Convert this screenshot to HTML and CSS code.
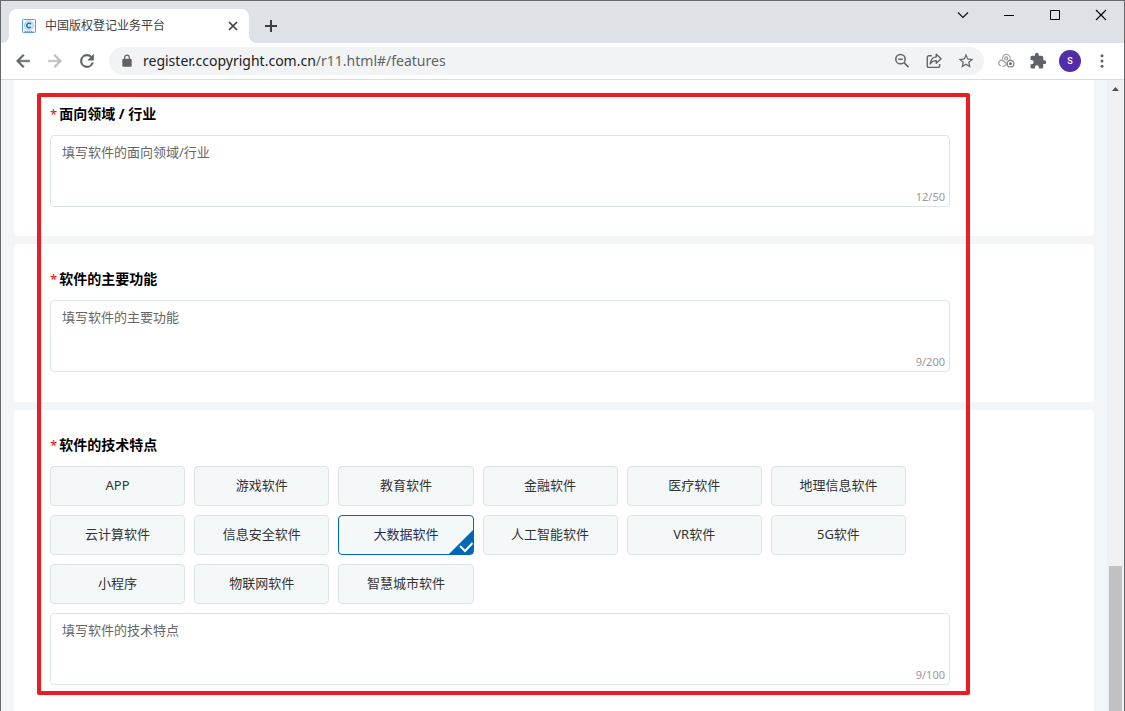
FILE: index.html
```html
<!DOCTYPE html>
<html lang="zh-CN">
<head>
<meta charset="utf-8">
<title>中国版权登记业务平台</title>
<link rel="stylesheet" href="styles.css">
</head>
<body>
<div class="window">
  <header class="titlebar">
    <div class="tab">
      <svg class="favicon" viewBox="0 0 16 16" aria-hidden="true">
        <rect x="1.500" y="1.500" width="13" height="13" rx="1" fill="#f1f8fd" stroke="#5b9fd0"/>
        <circle cx="8" cy="7.500" r="4.600" fill="#cfe5f5" stroke="#9cc8e6" stroke-width=".8"/>
        <path d="M9.900 6.100A2.300 2.300 0 1 0 9.900 8.900" fill="none" stroke="#1c6cad" stroke-width="1.500"/>
        <path d="M3.500 13.500H12.500" stroke="#5b9fd0" stroke-dasharray="1.500 .6"/>
      </svg>
      <span class="tab-title">中国版权登记业务平台</span>
      <button class="tab-close" aria-label="关闭标签页"><svg viewBox="0 0 16 16"><path d="M4 4l8 8M12 4l-8 8" stroke="#3c4043" stroke-width="1.700"/></svg></button>
    </div>
    <button class="new-tab" aria-label="新标签页"><svg viewBox="0 0 16 16"><path d="M8 2v12M2 8h12" stroke="#3c4043" stroke-width="2"/></svg></button>
    <div class="window-controls">
      <button aria-label="搜索标签页"><svg viewBox="0 0 16 16"><path d="M3 5.500l5 5 5-5" fill="none" stroke="#111" stroke-width="1.200"/></svg></button>
      <button aria-label="最小化"><svg viewBox="0 0 16 16"><path d="M3 8.500h10" stroke="#000"/></svg></button>
      <button aria-label="最大化"><svg viewBox="0 0 16 16"><path d="M3.500 3.500h9v9h-9z" fill="none" stroke="#000"/></svg></button>
      <button aria-label="关闭"><svg viewBox="0 0 16 16"><path d="M3 3l10 10M13 3L3 13" stroke="#000" stroke-width="1.200"/></svg></button>
    </div>
  </header>

  <nav class="toolbar">
    <button class="tool" aria-label="后退"><svg viewBox="0 0 24 24" fill="#5f6368" stroke="#5f6368" stroke-width=".6"><path d="M20 11H7.830l5.590-5.590L12 4l-8 8 8 8 1.410-1.410L7.830 13H20z"/></svg></button>
    <button class="tool" aria-label="前进"><svg viewBox="0 0 24 24" fill="#babcbe" stroke="#babcbe" stroke-width=".6"><path d="M4 11h12.170l-5.590-5.590L12 4l8 8-8 8-1.410-1.410L16.170 13H4z"/></svg></button>
    <button class="tool" aria-label="刷新"><svg viewBox="0 0 24 24" fill="#5f6368" stroke="#5f6368" stroke-width=".6"><path d="M17.650 6.350A8 8 0 1 0 19.730 14h-2.080A6 6 0 1 1 12 6c1.660 0 3.140.690 4.220 1.780L13 11h7V4z"/></svg></button>
    <div class="omnibox">
      <svg class="lock" viewBox="0 0 24 24" fill="#5f6368" aria-hidden="true"><path d="M18 8h-1V6A5 5 0 0 0 7 6v2H6a2 2 0 0 0-2 2v10c0 1.100.900 2 2 2h12a2 2 0 0 0 2-2V10a2 2 0 0 0-2-2zM9 6a3 3 0 0 1 6 0v2H9z"/></svg>
      <div class="url"><span>register.ccopyright.com.cn</span>/r11.html#/features</div>
      <button class="tool" aria-label="缩放"><svg viewBox="0 0 24 24" fill="none" stroke="#5f6368" stroke-width="2"><circle cx="10" cy="9.500" r="6.300"/><path d="M14.700 14.200l6 6M7 9.500h6"/></svg></button>
      <button class="tool" aria-label="分享"><svg viewBox="0 0 24 24" fill="none" stroke="#5f6368" stroke-width="1.800" stroke-linejoin="round"><path d="M9 5H5a2 2 0 0 0-2 2v11.500a2 2 0 0 0 2 2h12.500a2 2 0 0 0 2-2V16"/><path d="M15 3l6.500 6L15 15v-3.500c-3.500 0-6 1-8 4.500.5-5 3-9 8-9.500z"/></svg></button>
      <button class="tool" aria-label="收藏"><svg viewBox="0 0 24 24" fill="#5f6368"><path d="M22 9.240l-7.190-.620L12 2 9.190 8.630 2 9.240l5.460 4.730L5.820 21 12 17.270 18.180 21l-1.630-7.030zM12 15.400l-3.760 2.270 1-4.280-3.320-2.880 4.380-.380L12 6.100l1.710 4.040 4.380.380-3.320 2.880 1 4.280z"/></svg></button>
    </div>
    <div class="extensions">
      <button class="tool" aria-label="网盘扩展"><svg viewBox="0 0 24 24" fill="none" stroke="#9a9a9a" stroke-width="1.600"><path d="M7.500 10a5.200 5.200 0 1 1 9.500 1" stroke="#aaa"/><circle cx="12.300" cy="8.500" r="2"/><path d="M5 18.500a4 4 0 1 1 5-5.500l4.500 4.500"/><path d="M7.500 19.500c2.500 0 3.500-1.500 5-3.500"/><circle cx="18" cy="15.500" r="4.400" stroke="#858585"/><circle cx="18" cy="15.500" r="1.100" stroke="#666"/></svg></button>
      <button class="tool" aria-label="扩展程序"><svg viewBox="0 0 24 24" fill="#5f6368"><path d="M20.500 11H19V7a2 2 0 0 0-2-2h-4V3.500a2.500 2.500 0 0 0-5 0V5H4a2 2 0 0 0-2 2v3.800h1.500a2.700 2.700 0 0 1 0 5.400H2V20c0 1.100.9 2 2 2h3.800v-1.500a2.700 2.700 0 0 1 5.400 0V22H17a2 2 0 0 0 2-2v-4h1.500a2.500 2.500 0 0 0 0-5z"/></svg></button>
      <button class="tool avatar" aria-label="用户">S</button>
      <button class="tool" aria-label="菜单"><svg viewBox="0 0 24 24" fill="#5f6368"><circle cx="12" cy="5" r="2"/><circle cx="12" cy="12" r="2"/><circle cx="12" cy="19" r="2"/></svg></button>
    </div>
  </nav>

  <div class="viewport">
    <main class="page">
      <section class="card card-first">
        <label class="heading" for="industry">面向领域 / 行业</label>
        <div class="field">
          <textarea id="industry">填写软件的面向领域/行业</textarea>
          <span class="counter">12/50</span>
        </div>
      </section>
      <section class="card">
        <label class="heading" for="functions">软件的主要功能</label>
        <div class="field">
          <textarea id="functions">填写软件的主要功能</textarea>
          <span class="counter">9/200</span>
        </div>
      </section>
      <section class="card card-last">
        <label class="heading" for="traits">软件的技术特点</label>
        <div class="options">
          <button class="option">APP</button>
          <button class="option">游戏软件</button>
          <button class="option">教育软件</button>
          <button class="option">金融软件</button>
          <button class="option">医疗软件</button>
          <button class="option">地理信息软件</button>
          <button class="option">云计算软件</button>
          <button class="option">信息安全软件</button>
          <button class="option selected" aria-pressed="true">大数据软件<svg class="corner" viewBox="0 0 24 24" aria-hidden="true"><path d="M24 0v24H0z" fill="#0068b7"/><path d="M11 16l5 5 7.500-8" fill="none" stroke="#fff" stroke-width="2"/></svg></button>
          <button class="option">人工智能软件</button>
          <button class="option">VR软件</button>
          <button class="option">5G软件</button>
          <button class="option">小程序</button>
          <button class="option">物联网软件</button>
          <button class="option">智慧城市软件</button>
        </div>
        <div class="field">
          <textarea id="traits">填写软件的技术特点</textarea>
          <span class="counter">9/100</span>
        </div>
      </section>
      <div class="highlight"></div>
    </main>
    <div class="scrollbar" aria-hidden="true">
      <svg class="scroll-up" viewBox="0 0 17 17"><path d="M5 11h7L8.500 7z" fill="#505050"/></svg>
      <div class="thumb"></div>
    </div>
  </div>
</div>
</body>
</html>
```
FILE: styles.css
```css
* { box-sizing: border-box; }

body {
  margin: 0;
  font-family: "Noto Sans", "Noto Sans CJK SC", sans-serif;
  font-size: 13px;
  color: #333;
}

button {
  margin: 0;
  padding: 0;
  border: 0;
  background: none;
  font: inherit;
  color: inherit;
}

svg { display: block; }

.window {
  display: flex;
  flex-direction: column;
  height: 100vh;
  overflow: hidden;
  border: 1px solid #67686b;
  border-bottom: 0;
  background: #fff;
}

/* Title bar */
.titlebar {
  display: flex;
  flex: none;
  height: 42px;
  background: #dee1e6;
}

.tab {
  position: relative;
  display: flex;
  align-items: center;
  width: 240px;
  margin: 8px 0 0 8px;
  padding: 0 8px 0 12px;
  border-radius: 8px 8px 0 0;
  background: #fff;
}

.tab::before,
.tab::after {
  content: "";
  position: absolute;
  bottom: 0;
  width: 8px;
  height: 8px;
}

.tab::before {
  right: 100%;
  background: radial-gradient(circle at 0 0, transparent 8px, #fff 8px);
}

.tab::after {
  left: 100%;
  background: radial-gradient(circle at 100% 0, transparent 8px, #fff 8px);
}

.favicon {
  width: 16px;
  height: 16px;
  margin-right: 8px;
}

.tab-title {
  flex: 1;
  font-size: 12px;
  line-height: 16px;
  color: #3c4043;
}

.tab-close svg,
.new-tab svg {
  width: 16px;
  height: 16px;
}

.new-tab {
  margin: 8px 0 0 14px;
}

.window-controls {
  display: flex;
  height: 28px;
  margin-left: auto;
}

.window-controls button {
  display: grid;
  place-items: center;
  width: 46px;
}

.window-controls svg {
  width: 16px;
  height: 16px;
}

/* Toolbar */
.toolbar {
  display: flex;
  flex: none;
  align-items: center;
  height: 37px;
  padding: 0 6px;
  border-bottom: 1px solid #dadce0;
}

.tool {
  display: grid;
  flex: none;
  place-items: center;
  width: 32px;
  height: 28px;
}

.tool svg {
  width: 20px;
  height: 20px;
}

.omnibox {
  display: flex;
  flex: 1;
  align-items: center;
  height: 28px;
  margin: 0 6px;
  padding: 0 2px 0 11px;
  border-radius: 14px;
  background: #f1f3f4;
}

.omnibox .tool svg {
  width: 18px;
  height: 18px;
}

.lock {
  width: 14px;
  height: 14px;
}

.url {
  flex: 1;
  margin-left: 9px;
  font-size: 14px;
  line-height: 20px;
  color: #5f6368;
}

.url span { color: #202124; }

.extensions {
  display: flex;
  align-items: center;
}

.extensions .tool svg {
  width: 18px;
  height: 18px;
}

.extensions .avatar {
  width: 22px;
  height: 22px;
  margin: 0 5px;
  border-radius: 50%;
  background: #512da8;
  color: #fff;
  font-family: Roboto, sans-serif;
  font-size: 9px;
  font-weight: 500;
}

/* Page */
.viewport {
  display: flex;
  flex: 1;
  min-height: 0;
}

.page {
  position: relative;
  display: flex;
  flex: 1;
  flex-direction: column;
  gap: 8px;
  padding: 0 13px;
  background: #f2f6f9;
}

.card {
  padding: 24px 144px 30px 36px;
  border-radius: 4px;
  background: #fff;
}

.card-first {
  padding-top: 23px;
  padding-bottom: 29px;
  border-radius: 0 0 4px 4px;
}

.card-last { flex: 1; }

.heading {
  display: block;
  margin-bottom: 10px;
  font-size: 14px;
  font-weight: 700;
  line-height: 22px;
  color: #000;
}

.heading::before {
  content: "*";
  margin-right: 2px;
  font-size: 13px;
  font-weight: 400;
  color: #f00;
}

.field {
  position: relative;
  height: 72px;
}

.field textarea {
  display: block;
  width: 100%;
  height: 100%;
  padding: 6px 11px;
  overflow: hidden;
  resize: none;
  border: 1px solid #dce4e6;
  border-radius: 4px;
  outline: 0;
  background: #fff;
  font: inherit;
  line-height: 20px;
  color: #666;
}

.counter {
  position: absolute;
  right: 5px;
  bottom: 2px;
  font-size: 11px;
  line-height: 16px;
  color: #999;
}

.options {
  display: grid;
  grid-template-columns: repeat(6, 1fr);
  gap: 9px;
  margin: 0 44px 9px 0;
}

.option {
  position: relative;
  height: 40px;
  padding-bottom: 2px;
  border: 1px solid #dce4e6;
  border-radius: 4px;
  background: #f4f8f9;
  line-height: 20px;
}

.selected {
  border-color: #0068b7;
  color: #1f2d5c;
}

.corner {
  position: absolute;
  right: 0;
  bottom: 0;
  width: 24px;
  height: 24px;
}

.highlight {
  position: absolute;
  inset: 13px 137px 16px 36px;
  border: 4px solid #ed1c24;
  border-radius: 2px;
  pointer-events: none;
}

/* Scrollbar */
.scrollbar {
  display: flex;
  flex: none;
  flex-direction: column;
  justify-content: space-between;
  width: 17px;
  background: #f0f0f0;
}

.scroll-up {
  width: 17px;
  height: 17px;
}

.thumb {
  height: 23%;
  margin: 0 2px;
  background: #c1c1c1;
}
```
